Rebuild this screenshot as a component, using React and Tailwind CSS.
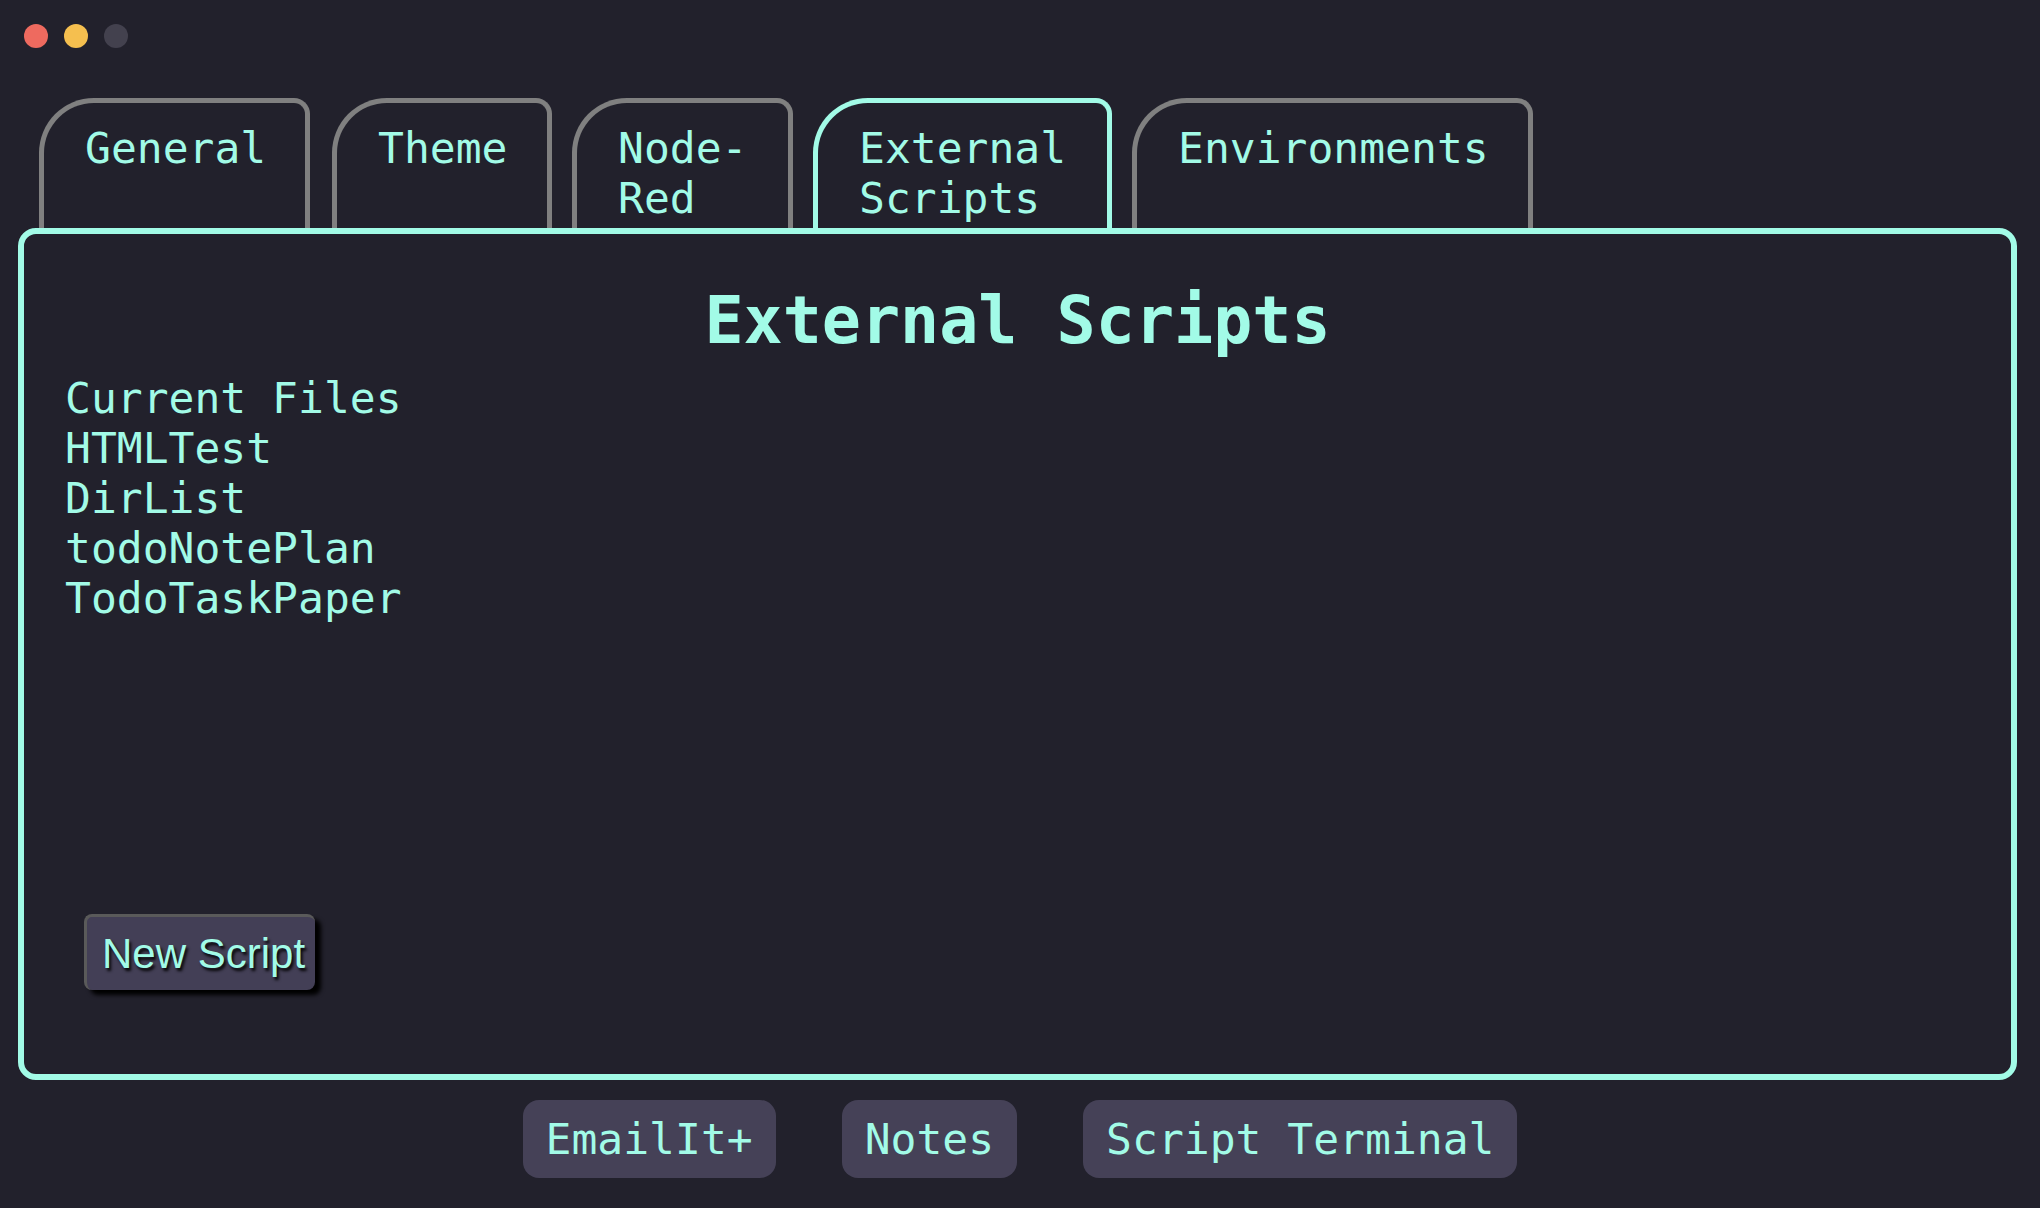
import React from "react";

const mono = { fontFamily: '"DejaVu Sans Mono", "Liberation Mono", monospace' };

function Tab({ lines, width, active, extra = "" }) {
  return (
    <div
      className={`h-[130px] border-[5px] border-b-0 rounded-tl-[55px] rounded-tr-[16px] pl-[41px] pt-[20px] text-[43px] leading-[50px] text-[#a2fbe7] shrink-0 ${
        active ? "border-[#a2fbe7]" : "border-[#808080]"
      } ${extra}`}
      style={{ ...mono, width }}
    >
      {lines.map((l, i) => (
        <div key={i} className="whitespace-pre">
          {l}
        </div>
      ))}
    </div>
  );
}

export default function App() {
  return (
    <div
      className="w-[2040px] h-[1208px] bg-[#22212c] flex flex-col overflow-hidden"
      style={mono}
    >
      {/* traffic lights */}
      <div className="flex gap-[16px] pl-[24px] pt-[24px]">
        <div className="w-[24px] h-[24px] rounded-full bg-[#ee6a5f]" />
        <div className="w-[24px] h-[24px] rounded-full bg-[#f5bf4f]" />
        <div className="w-[24px] h-[24px] rounded-full bg-[#43414e]" />
      </div>

      {/* tabs */}
      <div className="flex gap-[20px] pl-[39px] mt-[50px]">
        <Tab lines={["General"]} width={271} extra="mr-[2px]" />
        <Tab lines={["Theme"]} width={220} />
        <Tab lines={["Node-", "Red"]} width={221} />
        <Tab lines={["External", "Scripts"]} width={299} active />
        <Tab lines={["Environments"]} width={401} />
      </div>

      {/* panel */}
      <div className="ml-[18px] w-[1999px] h-[852px] border-[6px] border-[#a2fbe7] rounded-[18px] flex flex-col pl-[41px] pt-[49px]">
        <div className="text-center text-[65px] leading-[76px] font-bold text-[#a2fbe7] mb-[14px] pr-[41px]">
          External Scripts
        </div>
        <div className="flex flex-col text-[43px] leading-[50px] text-[#a2fbe7]">
          <div>Current Files</div>
          <div>HTMLTest</div>
          <div>DirList</div>
          <div>todoNotePlan</div>
          <div>TodoTaskPaper</div>
        </div>
        <div className="mt-auto mb-[84px] ml-[19px]">
          <button
            className="h-[76px] w-[231px] flex items-center pl-[15px] bg-[#433f56] rounded-[8px] border-t-[3px] border-l-[3px] border-[#5a5a5a] shadow-[6px_5px_4px_rgba(0,0,0,1)] text-[42px] text-[#a2fbe7] [text-shadow:2px_3px_3px_rgba(0,0,0,0.9)]"
            style={{ fontFamily: '"Liberation Sans", Arial, sans-serif' }}
          >
            New Script
          </button>
        </div>
      </div>

      {/* bottom buttons */}
      <div className="flex justify-center gap-[66px] mt-[20px]">
        {["EmailIt+", "Notes", "Script Terminal"].map((t) => (
          <div
            key={t}
            className="h-[78px] px-[23px] flex items-center rounded-[16px] bg-[#454157] text-[43px] text-[#a2fbe7] whitespace-pre"
          >
            {t}
          </div>
        ))}
      </div>
    </div>
  );
}
